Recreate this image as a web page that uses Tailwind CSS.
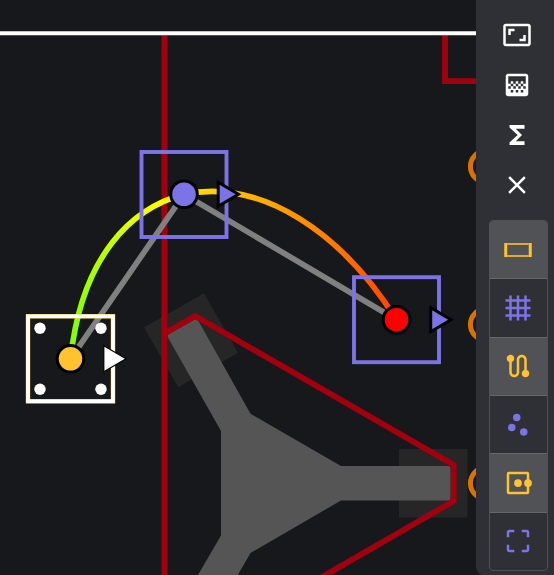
<!DOCTYPE html>
<html lang="en">
<head>
<meta charset="utf-8">
<meta name="viewport" content="width=device-width, initial-scale=1">
<title>Path editor</title>
<script src="https://cdn.jsdelivr.net/npm/@tailwindcss/browser@4"></script>
</head>
<body class="flex min-h-screen bg-[#17181b] font-['Roboto',sans-serif]">
<main class="flex min-w-0 flex-1 overflow-hidden">
  <svg class="w-full" role="img" aria-label="Field with trajectory" fill="none">
    <defs>
      <linearGradient id="speed" gradientUnits="userSpaceOnUse" x1="71" y1="0" x2="397" y2="0">
        <stop offset="0" stop-color="#80ff00"/>
        <stop offset=".06" stop-color="#a4ff00"/>
        <stop offset=".17" stop-color="#dcff00"/>
        <stop offset=".27" stop-color="#fffb00"/>
        <stop offset=".42" stop-color="#ffd500"/>
        <stop offset=".55" stop-color="#ffb300"/>
        <stop offset=".8" stop-color="#ff7b00"/>
        <stop offset="1" stop-color="#ff4000"/>
      </linearGradient>
    </defs>
    <!-- field -->
    <g fill="#262626">
      <path d="M204 293.3L238 352.7L178.3 387.3L144 327.5Z"/>
      <path d="M399 449H467.5V517.5H399Z"/>
    </g>
    <path fill="#555" d="M168 337.5Q167 335.500 169 334L194 320Q197 318.500 199 322L250.500 413.700L341 466H448Q450.500 466 450.500 469V498Q450.500 500.500 448 500.500H341L250.500 553L224 599H184L221 535.500V431Z"/>
    <g stroke="#a2000f" stroke-width="5.8">
      <path d="M164.300 35V2000"/>
      <path d="M164.300 333.500L195.200 316L453.700 465V501L280 601.200"/>
      <path d="M445 35V81.200H560"/>
    </g>
    <path stroke="#fff" stroke-width="4" d="M0 33.200H2000"/>
    <g stroke="#d97200" stroke-width="5">
      <circle cx="486" cy="166.500" r="15.600"/>
      <circle cx="486" cy="324.500" r="15.600"/>
      <circle cx="486" cy="483.200" r="15.600"/>
    </g>
    <!-- path -->
    <path stroke="#808080" stroke-width="5.7" d="M70.500 358.800L184 194.300L396.500 319.700"/>
    <path stroke="url(#speed)" stroke-width="5.6" d="M70.500 358.800C82 255 132 208 184 194.300C262 178 342 233 396.500 319.700"/>
    <!-- waypoints -->
    <g stroke="#7c73e6" stroke-width="3.900">
      <rect x="141.500" y="152" width="85" height="85"/>
      <rect x="354" y="277.200" width="85" height="85"/>
    </g>
    <rect x="28" y="316.300" width="85" height="85" stroke="#ffc32f" stroke-width="4.400"/>
    <rect x="28" y="316.300" width="85" height="85" stroke="#fff" stroke-width="3.700"/>
    <g fill="#fff">
      <circle cx="40" cy="328.300" r="5.700"/>
      <circle cx="101" cy="328.300" r="5.700"/>
      <circle cx="40" cy="389.300" r="5.700"/>
      <circle cx="101" cy="389.300" r="5.700"/>
    </g>
    <g stroke="#000" stroke-width="3">
      <circle cx="184" cy="194.300" r="13.300" fill="#7c73e6"/>
      <circle cx="396.500" cy="319.700" r="13.300" fill="#f00"/>
      <circle cx="70.500" cy="358.800" r="13.300" fill="#ffc32f"/>
      <path fill="#7c73e6" d="M218.200 182.300V206.300L238.500 194.300Z"/>
      <path fill="#7c73e6" d="M430.700 307.700V331.700L451 319.700Z"/>
      <path fill="#fff" stroke-width="1.200" d="M103.800 345.800V371.800L126 358.800Z"/>
    </g>
  </svg>
</main>
<aside class="flex w-[78px] shrink-0 flex-col self-start rounded-bl-lg bg-[#2f3035] pt-2.5 pb-1" aria-label="Tools">
  <div class="mr-2 ml-3 flex flex-col text-white">
    <button type="button" aria-label="Fit to window" class="flex h-[50px] items-center justify-center">
      <svg class="size-[30px]" viewBox="0 0 24 24" fill="currentColor"><path d="M19 12h-2v3h-3v2h5v-5zM7 9h3V7H5v5h2V9zm14-6H3c-1.1 0-2 .9-2 2v14c0 1.100.9 2 2 2h18c1.100 0 2-.9 2-2V5c0-1.100-.9-2-2-2zm0 16.010H3V4.990h18v14.020z"/></svg>
    </button>
    <button type="button" aria-label="Gradient" class="flex h-[50px] items-center justify-center">
      <svg class="size-[30px]" viewBox="0 0 24 24" fill="currentColor"><path d="M11 9h2v2h-2zm-2 2h2v2H9zm4 0h2v2h-2zm2-2h2v2h-2zM7 9h2v2H7zm12-6H5c-1.100 0-2 .9-2 2v14c0 1.100.9 2 2 2h14c1.100 0 2-.9 2-2V5c0-1.100-.9-2-2-2zM9 18H7v-2h2v2zm4 0h-2v-2h2v2zm4 0h-2v-2h2v2zm2-7h-2v2h2v2h-2v-2h-2v2h-2v-2h-2v2H9v-2H7v2H5v-2h2v-2H5V5h14v6z"/></svg>
    </button>
    <button type="button" aria-label="Variables" class="flex h-[50px] items-center justify-center">
      <svg class="size-[30px]" viewBox="0 0 24 24" fill="currentColor"><path d="M18 4H6v2l6.500 6L6 18v2h12v-3h-7l5-5-5-5h7z"/></svg>
    </button>
    <button type="button" aria-label="Clear" class="flex h-[50px] items-center justify-center">
      <svg class="size-[30px]" viewBox="0 0 24 24" fill="currentColor"><path d="M19 6.410L17.590 5 12 10.590 6.410 5 5 6.410 10.590 12 5 17.590 6.410 19 12 13.410 17.590 19 19 17.590 13.410 12z"/></svg>
    </button>
  </div>
  <div role="group" aria-label="View layers" class="mt-2.5 mr-1.5 ml-[13px] flex h-[351px] flex-col divide-y divide-[#66676b] overflow-hidden rounded border border-[#505155]">
    <button type="button" aria-label="Field" aria-pressed="true" class="flex flex-1 items-center justify-center bg-[#515255] pr-px text-[#ffc32f]">
      <svg class="size-[30px]" viewBox="0 0 24 24" fill="currentColor"><path d="M1 6.400h2.400v11.200H1zM20.600 6.400H23v11.200h-2.400z"/><path fill-opacity=".8" d="M3.400 6.400h17.200V8H3.400zM3.400 16h17.200v1.600H3.400z"/></svg>
    </button>
    <button type="button" aria-label="Grid" aria-pressed="false" class="flex flex-1 items-center justify-center pr-px text-[#7c73e6]">
      <svg class="size-[30px]" viewBox="0 0 24 24" fill="currentColor"><path d="M22 7V5h-3V2h-2v3h-4V2h-2v3H7V2H5v3H2v2h3v4H2v2h3v4H2v2h3v3h2v-3h4v3h2v-3h4v3h2v-3h3v-2h-3v-4h3v-2h-3V7h3zM7 7h4v4H7V7zm0 10v-4h4v4H7zm10 0h-4v-4h4v4zm0-6h-4V7h4v4z"/></svg>
    </button>
    <button type="button" aria-label="Trajectory" aria-pressed="true" class="flex flex-1 items-center justify-center bg-[#515255] pr-px text-[#ffc32f]">
      <svg class="size-[30px]" viewBox="0 0 24 24" fill="currentColor"><path d="M19 15.180V7c0-2.210-1.790-4-4-4s-4 1.790-4 4v10c0 1.100-.9 2-2 2s-2-.9-2-2V8.820C8.160 8.400 9 7.300 9 6c0-1.660-1.340-3-3-3S3 4.340 3 6c0 1.300.84 2.400 2 2.820V17c0 2.210 1.790 4 4 4s4-1.790 4-4V7c0-1.100.9-2 2-2s2 .9 2 2v8.180c-1.160.41-2 1.510-2 2.820 0 1.660 1.340 3 3 3s3-1.340 3-3c0-1.300-.84-2.400-2-2.820z"/></svg>
    </button>
    <button type="button" aria-label="Samples" aria-pressed="false" class="flex flex-1 items-center justify-center pr-px text-[#7c73e6]">
      <svg class="size-[30px]" viewBox="0 0 24 24" fill="currentColor"><circle cx="7" cy="14" r="3"/><circle cx="11" cy="6" r="3"/><circle cx="16.600" cy="17.600" r="3"/></svg>
    </button>
    <button type="button" aria-label="Waypoints" aria-pressed="true" class="flex flex-1 items-center justify-center bg-[#515255] pr-px text-[#ffc32f]">
      <svg class="size-[30px]" viewBox="0 0 24 24" fill="currentColor"><rect x="4" y="4" width="16" height="16" rx=".6" fill="none" stroke="currentColor" stroke-width="2"/><circle cx="12" cy="12" r="3.100"/><circle cx="20" cy="12" r="3.100"/></svg>
    </button>
    <button type="button" aria-label="Focus" aria-pressed="false" class="flex flex-1 items-center justify-center pr-px text-[#7c73e6]">
      <svg class="size-[30px]" viewBox="0 0 24 24" fill="currentColor"><path d="M3 5v4h2V5h4V3H5c-1.100 0-2 .9-2 2zm2 10H3v4c0 1.100.9 2 2 2h4v-2H5v-4zm14 4h-4v2h4c1.100 0 2-.9 2-2v-4h-2v4zm0-16h-4v2h4v4h2V5c0-1.100-.9-2-2-2z"/></svg>
    </button>
  </div>
</aside>
</body>
</html>
